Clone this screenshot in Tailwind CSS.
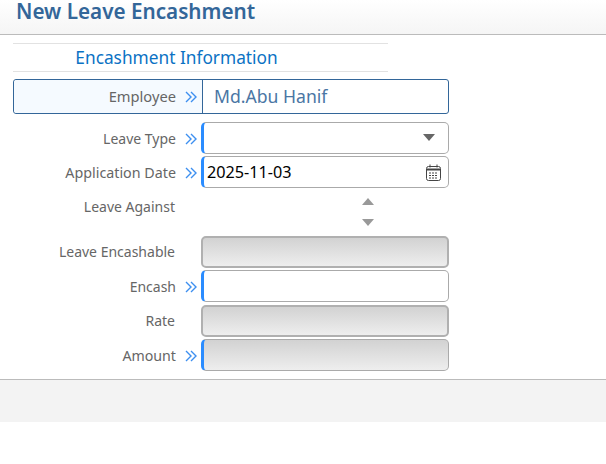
<!DOCTYPE html>
<html lang="en">
<head>
    <meta charset="UTF-8">
    <title>New Leave Encashment</title>
    <script src="https://cdn.jsdelivr.net/npm/@tailwindcss/browser@4"></script>
</head>
<body class="bg-white font-['Noto_Sans','Open_Sans',sans-serif] overflow-hidden">
    <div class="h-[35px] pl-[16px] border-b border-[#bbbbbb] bg-gradient-to-b from-white to-[#f5f5f5]">
        <h1 class="text-[20.7px] leading-[23px] font-semibold text-[#336699]">New Leave Encashment</h1>
    </div>

    <div class="h-[344px] pl-[13px] pt-2">
        <div class="w-[375px] h-[29px] pr-[48px] border-y border-[#e2e2e2] text-center text-[17.3px] leading-[28px] text-[#0b72c4]">Encashment Information</div>

        <div class="w-[436px] mt-[7px] h-[35px] flex border border-[#336699] rounded-[3px]">
            <div class="w-[189px] bg-[#f5faff] border-r border-[#336699] flex items-center justify-end rounded-l-[3px]">
                <span class="text-[14.7px] text-[#666666]">Employee</span>
                <svg class="w-[12px] h-[12px] ml-[9px] mr-[5px]" viewBox="0 0 12 12" fill="none" stroke="#3d8ff0" stroke-width="1.4"><path d="M1 1l5 5-5 5M6 1l5 5-5 5"/></svg>
            </div>
            <div class="flex-1 pl-[11px] flex items-center text-[17.6px] text-[#4a76a4]">Md.Abu Hanif</div>
        </div>

        <div class="w-[436px] mt-2 flex flex-col gap-[2px]">
            <div class="flex h-[32px]">
                <div class="w-[188px] flex items-center justify-end pt-[1px]">
                    <span class="text-sm text-[#666666]">Leave Type</span>
                    <svg class="w-[12px] h-[12px] ml-[9px] mr-[4px]" viewBox="0 0 12 12" fill="none" stroke="#3d8ff0" stroke-width="1.4"><path d="M1 1l5 5-5 5M6 1l5 5-5 5"/></svg>
                </div>
                <div class="flex-1 flex items-center justify-end pr-[13px] pb-[1px] border border-[#aaaaaa] border-l-[3px] border-l-[#2a8cff] rounded-[5px]">
                    <div class="w-0 h-0 border-x-[6px] border-x-transparent border-t-[7px] border-t-[#666666]"></div>
                </div>
            </div>

            <div class="flex h-[32px]">
                <div class="w-[188px] flex items-center justify-end pt-[1px]">
                    <span class="text-[14.3px] text-[#666666]">Application Date</span>
                    <svg class="w-[12px] h-[12px] ml-[9px] mr-[4px]" viewBox="0 0 12 12" fill="none" stroke="#3d8ff0" stroke-width="1.4"><path d="M1 1l5 5-5 5M6 1l5 5-5 5"/></svg>
                </div>
                <div class="flex-1 flex items-center justify-between pl-[3px] pr-[7px] border border-[#aaaaaa] border-l-[3px] border-l-[#2a8cff] rounded-[5px]">
                    <span class="text-[16.2px] text-black">2025-11-03</span>
                    <svg class="w-[15px] h-[17px]" viewBox="0 0 15 17" fill="none" stroke="#444444"><rect x="0.5" y="2.5" width="14" height="14" rx="2"/><path d="M1 5.5h13" stroke-width="2"/><path d="M4 0.5v3M11 0.5v3"/><path d="M3 9h9M3 11.5h9M3 14h9" stroke-dasharray="2 1"/></svg>
                </div>
            </div>

            <div class="flex h-[44px]">
                <div class="w-[162px] pt-[7px] text-right text-sm text-[#666666]">Leave Against</div>
                <div class="w-[193px] flex flex-col items-end gap-[14px] pt-[8px]">
                    <div class="w-0 h-0 border-x-[6px] border-x-transparent border-b-[7px] border-b-[#999999] mr-[-6px]"></div>
                    <div class="w-0 h-0 border-x-[6px] border-x-transparent border-t-[7px] border-t-[#999999] mr-[-6px]"></div>
                </div>
            </div>

            <div class="flex h-[32px]">
                <div class="w-[162px] flex items-center justify-end text-sm text-[#666666]">Leave Encashable</div>
                <div class="ml-[26px] flex-1 border-2 border-[#b0b0b0] rounded-[5px] bg-gradient-to-b from-[#d2d2d2] to-[#eeeeee]"></div>
            </div>

            <div class="flex h-[32px]">
                <div class="w-[188px] flex items-center justify-end pt-[1px]">
                    <span class="text-sm text-[#666666]">Encash</span>
                    <svg class="w-[12px] h-[12px] ml-[9px] mr-[4px]" viewBox="0 0 12 12" fill="none" stroke="#3d8ff0" stroke-width="1.4"><path d="M1 1l5 5-5 5M6 1l5 5-5 5"/></svg>
                </div>
                <div class="flex-1 border border-[#aaaaaa] border-l-[3px] border-l-[#2a8cff] rounded-[5px]"></div>
            </div>

            <div class="flex h-[32px] mt-[1px]">
                <div class="w-[162px] flex items-center justify-end text-sm text-[#666666]">Rate</div>
                <div class="ml-[26px] flex-1 border-2 border-[#b0b0b0] rounded-[5px] bg-gradient-to-b from-[#d2d2d2] to-[#eeeeee]"></div>
            </div>

            <div class="flex h-[32px]">
                <div class="w-[188px] flex items-center justify-end pt-[1px]">
                    <span class="text-[14.2px] text-[#666666]">Amount</span>
                    <svg class="w-[12px] h-[12px] ml-[9px] mr-[4px]" viewBox="0 0 12 12" fill="none" stroke="#3d8ff0" stroke-width="1.4"><path d="M1 1l5 5-5 5M6 1l5 5-5 5"/></svg>
                </div>
                <div class="flex-1 border border-[#aaaaaa] border-l-[3px] border-l-[#2a8cff] rounded-[5px] bg-gradient-to-b from-[#d2d2d2] to-[#eeeeee]"></div>
            </div>
        </div>
    </div>

    <div class="h-[43px] border-t border-[#bbbbbb] bg-[#f3f3f3]"></div>
</body>
</html>
